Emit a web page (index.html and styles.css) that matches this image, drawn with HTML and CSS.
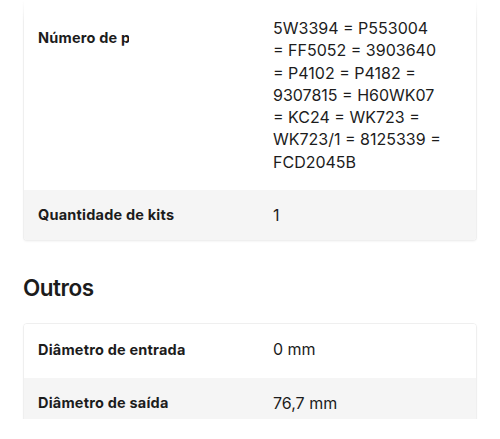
FILE: index.html
```html
<!DOCTYPE html>
<html lang="pt">
<head>
<meta charset="utf-8">
<link rel="stylesheet" href="styles.css">
</head>
<body>
<div class="page">
  <div class="fade"></div>
  <div class="card first">
    <div class="row tall">
      <div class="label"><span class="clip">Número de peças</span></div>
      <div class="value">5W3394 = P553004<br>= FF5052 = 3903640<br>= P4102 = P4182 =<br>9307815 = H60WK07<br>= KC24 = WK723 =<br>WK723/1 = 8125339 =<br>FCD2045B</div>
    </div>
    <div class="row alt">
      <div class="label">Quantidade de kits</div>
      <div class="value">1</div>
    </div>
  </div>
  <h2 class="heading">Outros</h2>
  <div class="card second">
    <div class="row big">
      <div class="label">Diâmetro de entrada</div>
      <div class="value">0 mm</div>
    </div>
    <div class="row big alt">
      <div class="label">Diâmetro de saída</div>
      <div class="value">76,7 mm</div>
    </div>
  </div>
</div>
</body>
</html>
```
FILE: styles.css
```css
html, body {
  margin: 0;
  padding: 0;
  background: #fff;
}
body {
  font-family: "Inter", sans-serif;
  color: #1c1c1c;
}
.page {
  position: relative;
  height: 419px;
  overflow: hidden;
  padding: 0 23px;
}
.fade {
  position: absolute;
  left: 0;
  right: 0;
  top: 0;
  height: 22px;
  background: linear-gradient(#fff, rgba(255,255,255,0));
  z-index: 2;
}
.card {
  border: 1px solid #efefef;
  border-radius: 4px;
  overflow: hidden;
  box-shadow: 0 1px 2px rgba(0,0,0,0.04);
}
.card.first {
  border-top: none;
  border-radius: 0 0 4px 4px;
}
.row {
  display: grid;
  grid-template-columns: 235px 1fr;
  padding: 14px 14px;
  align-items: center;
  background: #fff;
}
.row.tall {
  align-items: start;
  padding: 17px 14px 17px;
}
.row.alt {
  background: #f5f5f5;
}
.row.big {
  padding: 14px 14px 17px;
}
.label {
  font-size: 14.5px;
  font-weight: 700;
  line-height: 22px;
  letter-spacing: 0.2px;
}
.row.tall .label {
  margin-top: 10px;
}
.clip {
  display: inline-block;
  width: 91px;
  overflow: hidden;
  white-space: nowrap;
  vertical-align: top;
}
.value {
  font-size: 16px;
  line-height: 22.3px;
  white-space: nowrap;
}
.heading {
  margin: 32px 0 0;
  height: 50px;
  font-size: 22.5px;
  font-weight: 600;
  line-height: 30px;
  letter-spacing: -0.5px;
}
```
